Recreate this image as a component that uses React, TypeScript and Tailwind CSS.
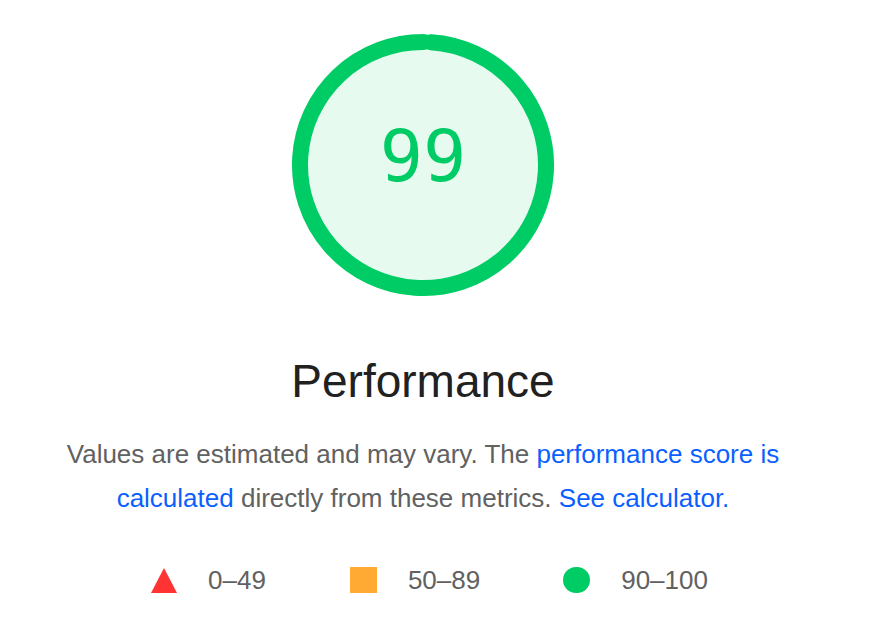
import React from 'react';

const GREEN = '#00cc66';

const Gauge: React.FC<{ score: number }> = ({ score }) => {
  const r = 123;
  const c = 2 * Math.PI * r;
  return (
    <div className="relative w-[262px] h-[262px]">
      <svg width="262" height="262" viewBox="0 0 262 262">
        <circle cx="131" cy="131" r={r} fill="#e6faf0" stroke="#e6faf0" strokeWidth="16" />
        <circle
          cx="131"
          cy="131"
          r={r}
          fill="none"
          stroke={GREEN}
          strokeWidth="16"
          strokeLinecap="round"
          strokeDasharray={`${(score / 100) * c} ${c}`}
          transform="rotate(-86.3 131 131)"
        />
      </svg>
      <div className="absolute left-0 right-0 top-[86px] text-center text-[72px] leading-[72px] text-[#00cc66] font-['DejaVu_Sans_Mono',monospace]">
        {score}
      </div>
    </div>
  );
};

const App: React.FC = () => {
  return (
    <div className="min-h-screen bg-white font-['Liberation_Sans',Arial,sans-serif]">
      <div className="w-[846px] flex flex-col items-center pt-[34px]">
        <Gauge score={99} />

        <h2 className="mt-[59px] text-[46px] leading-[52px] text-[#212121]">Performance</h2>

        {/* description, broken where the report breaks it */}
        <div className="mt-[25px] flex flex-col items-center text-[26px] leading-[44px] text-[#616161]">
          <div>
            Values are estimated and may vary. The{' '}
            <a className="text-[#0b5fff]">performance score is</a>
          </div>
          <div>
            <a className="text-[#0b5fff]">calculated</a> directly from these metrics.{' '}
            <a className="text-[#0b5fff]">See calculator.</a>
          </div>
        </div>

        {/* legend */}
        <div className="mt-[45px] pl-[13px] flex items-center text-[26px] leading-[30px] text-[#616161]">
          <div className="flex items-center gap-[31px]">
            <svg width="26" height="25" viewBox="0 0 26 25">
              <polygon points="13,0 26,25 0,25" fill="#ff3333" />
            </svg>
            <span>0–49</span>
          </div>
          <div className="ml-[84px] flex items-center gap-[31px]">
            <div className="w-[27px] h-[26px] bg-[#ffaa33]" />
            <span>50–89</span>
          </div>
          <div className="ml-[83px] flex items-center gap-[31px]">
            <div className="w-[27px] h-[26px] rounded-full bg-[#00cc66]" />
            <span>90–100</span>
          </div>
        </div>
      </div>
    </div>
  );
};

export default App;
